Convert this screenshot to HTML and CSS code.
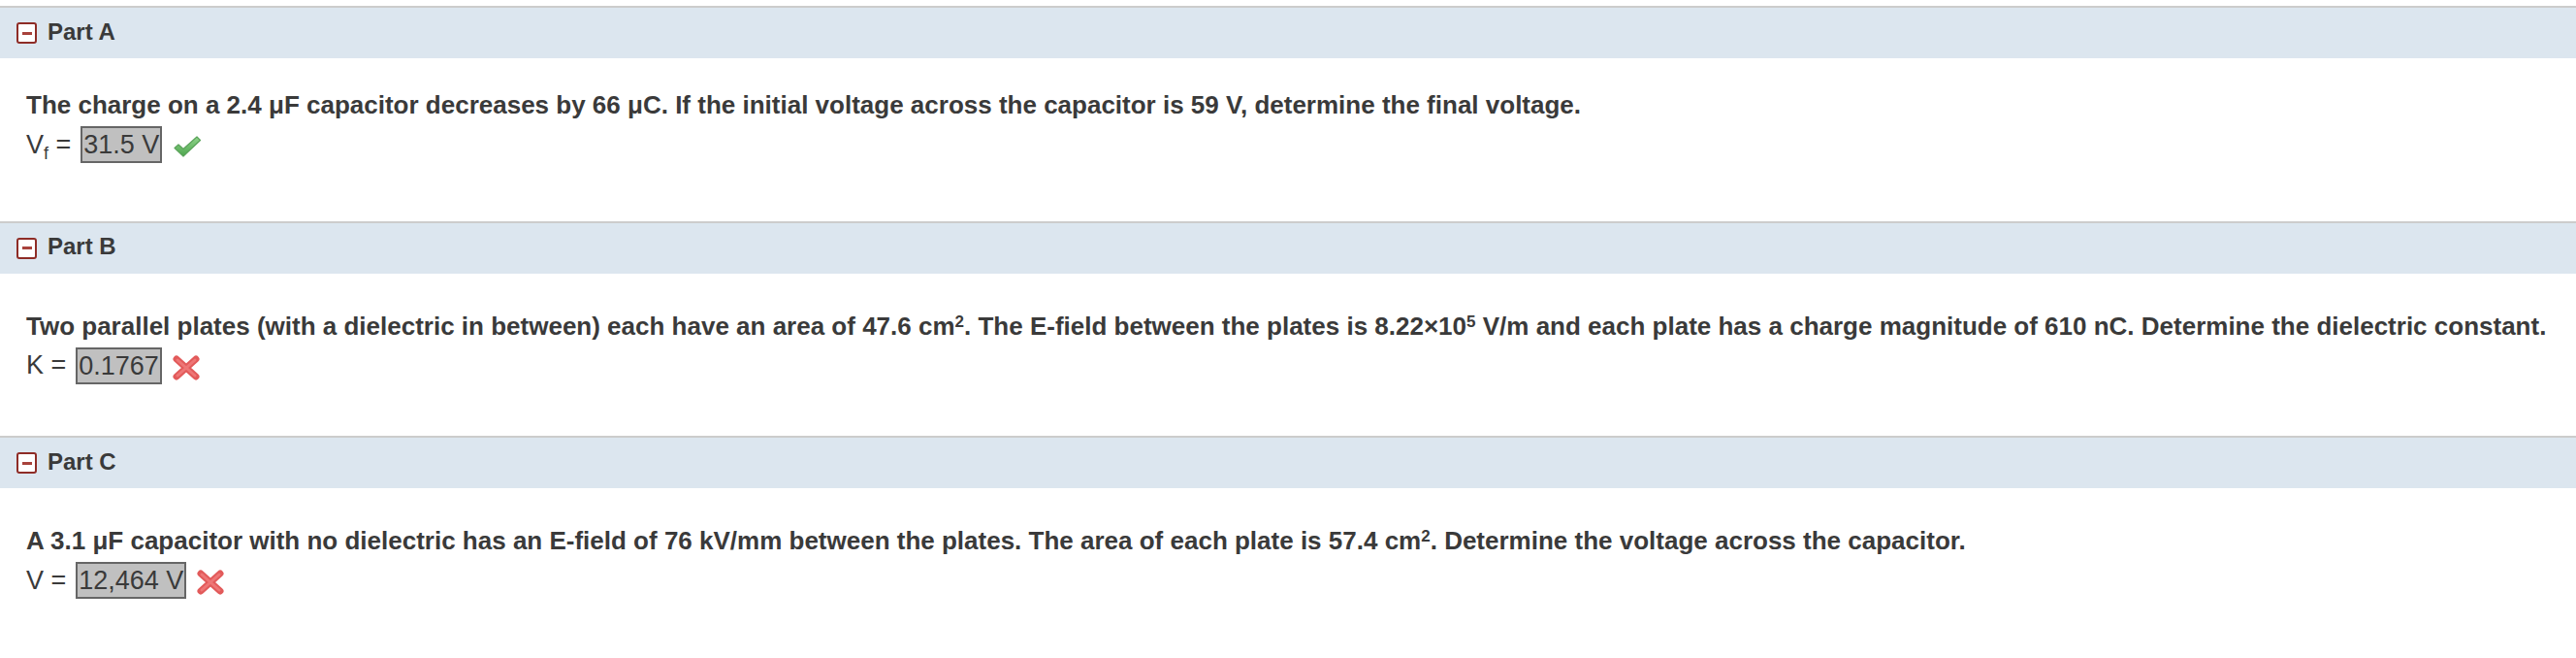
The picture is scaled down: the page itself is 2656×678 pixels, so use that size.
FILE: index.html
```html
<!DOCTYPE html>
<html lang="en">
<head>
<meta charset="utf-8">
<title>Parts</title>
<link rel="stylesheet" href="styles.css">
</head>
<body>
<div class="parts">
  <section class="part">
    <div class="part-header">
      <span class="toggle"><span class="toggle-bar"></span></span>
      <span class="part-title">Part A</span>
    </div>
    <div class="part-body">
      <p class="question">The charge on a 2.4 <span class="mu">μ</span>F capacitor decreases by 66 <span class="mu">μ</span>C. If the initial voltage across the capacitor is 59 V, determine the final voltage.</p>
      <div class="answer">
        <span class="label">V<sub>f</sub> =</span>
        <span class="answer-box">31.5 V</span>
        <svg class="mark check" width="30" height="24" viewBox="0 0 30 24">
          <defs>
            <linearGradient id="gck" x1="0" y1="0" x2="0" y2="1">
              <stop offset="0" stop-color="#8fd48a"/>
              <stop offset="1" stop-color="#4ea64e"/>
            </linearGradient>
          </defs>
          <path d="M2 13.5 L6 10 L11 14.5 L25 2 L28.5 5.5 L11 22 Z" fill="url(#gck)" stroke="#5aa35a" stroke-width="1.2" stroke-linejoin="round"/>
        </svg>
      </div>
    </div>
  </section>
  <section class="part">
    <div class="part-header">
      <span class="toggle"><span class="toggle-bar"></span></span>
      <span class="part-title">Part B</span>
    </div>
    <div class="part-body">
      <p class="question">Two parallel plates (with a dielectric in between) each have an area of 47.6 cm<sup>2</sup>. The E-field between the plates is 8.22×10<sup>5</sup> V/m and each plate has a charge magnitude of 610 nC. Determine the dielectric constant.</p>
      <div class="answer">
        <span class="label">K =</span>
        <span class="answer-box">0.1767</span>
        <svg class="mark cross" width="28" height="26" viewBox="0 0 28 26">
          <path d="M4 4 L24 22 M24 4 L4 22" stroke="#e25a5a" stroke-width="7" stroke-linecap="round"/>
          <path d="M5 5 L23 21 M23 5 L5 21" stroke="#ee7676" stroke-width="3" stroke-linecap="round"/>
        </svg>
      </div>
    </div>
  </section>
  <section class="part">
    <div class="part-header">
      <span class="toggle"><span class="toggle-bar"></span></span>
      <span class="part-title">Part C</span>
    </div>
    <div class="part-body">
      <p class="question">A 3.1 <span class="mu">μ</span>F capacitor with no dielectric has an E-field of 76 kV/mm between the plates. The area of each plate is 57.4 cm<sup>2</sup>. Determine the voltage across the capacitor.</p>
      <div class="answer">
        <span class="label">V =</span>
        <span class="answer-box">12,464 V</span>
        <svg class="mark cross" width="28" height="26" viewBox="0 0 28 26">
          <path d="M4 4 L24 22 M24 4 L4 22" stroke="#e25a5a" stroke-width="7" stroke-linecap="round"/>
          <path d="M5 5 L23 21 M23 5 L5 21" stroke="#ee7676" stroke-width="3" stroke-linecap="round"/>
        </svg>
      </div>
    </div>
  </section>
</div>
</body>
</html>
```
FILE: styles.css
```css
html, body {
  margin: 0;
  padding: 0;
  background: #ffffff;
}
body {
  font-family: "Liberation Sans", Arial, sans-serif;
  color: #3a3a3a;
}
.parts {
  padding-top: 6px;
}
.part-header {
  display: flex;
  align-items: center;
  height: 52px;
  border-top: 2px solid #cccccc;
  background: #dce6ef;
  padding-left: 17px;
}
.toggle {
  box-sizing: border-box;
  width: 21px;
  height: 22px;
  border: 2px solid #8e2c26;
  border-radius: 3px;
  background: #ffffff;
  display: flex;
  align-items: center;
  justify-content: center;
}
.toggle-bar {
  width: 10px;
  height: 3px;
  background: #a8423c;
}
.part-title {
  margin-left: 11px;
  margin-bottom: 3px;
  font-size: 24px;
  font-weight: bold;
  color: #3a3a3a;
}
.part-body {
  height: 167.5px;
  padding-left: 27px;
  box-sizing: border-box;
  padding-top: 33px;
}
.question {
  margin: 0;
  font-size: 26px;
  font-weight: bold;
  line-height: 30px;
}
.question sup {
  font-size: 17px;
  vertical-align: 8px;
  line-height: 34px;
}
.mu {
  font-weight: bold;
}
.answer {
  display: flex;
  align-items: center;
  margin-top: 7px;
  font-size: 27px;
}
.label sub {
  font-size: 18px;
  line-height: 0;
}
.answer-box {
  margin-left: 10px;
  padding: 1px 1px;
  border: 2px solid #666666;
  background: #c0c0c0;
  line-height: 32px;
}
.mark {
  margin-left: 11px;
  margin-top: 4px;
}
```
